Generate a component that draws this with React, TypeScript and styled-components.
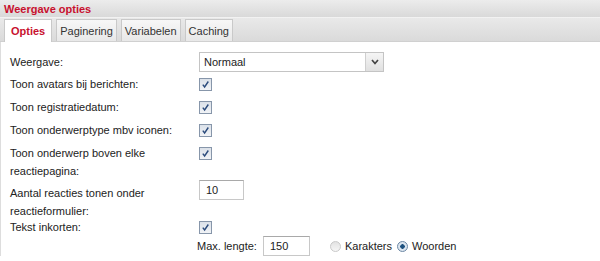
import { Fragment } from "react";
import styled, { createGlobalStyle } from "styled-components";

const Global = createGlobalStyle`
  html, body { margin: 0; padding: 0; background: #fff; }
  body { font-family: "Liberation Sans", Arial, sans-serif; font-size: 11px; color: #222; }
`;

const Panel = styled.div`
  width: 600px;
  height: 261px;
  overflow: hidden;
  background: #fff;
`;

const Header = styled.div`
  height: 17px;
  padding-left: 4px;
  display: flex;
  align-items: center;
  background: linear-gradient(#ececec, #d9d9d9);
  border-bottom: 1px solid #f2f2f2;
  color: #c8102e;
  font-weight: bold;
  font-size: 11px;
`;

const TabBar = styled.div`
  height: 23px;
  padding-left: 4px;
  display: flex;
  align-items: flex-end;
  gap: 4px;
  background: linear-gradient(#e9e9e9, #dadada);
  border-bottom: 1px solid #d0d0d0;
`;

const Tab = styled.div<{ $active?: boolean }>`
  height: ${(p) => (p.$active ? 22 : 21)}px;
  padding: 0 ${(p) => (p.$active ? 6 : 3)}px;
  display: flex;
  align-items: center;
  border: 1px solid #c9c9c9;
  border-bottom: none;
  background: ${(p) => (p.$active ? "#fff" : "linear-gradient(#f7f7f7, #e8e8e8)")};
  color: ${(p) => (p.$active ? "#c8102e" : "#333")};
  font-weight: ${(p) => (p.$active ? "bold" : "normal")};
  margin-bottom: ${(p) => (p.$active ? "-1px" : "0")};
`;

const Body = styled.div`
  border-left: 1px solid #ddd;
  padding: 10px 0 0 9px;
  display: grid;
  grid-template-columns: 189px 1fr;
  row-gap: 5px;
  align-items: start;
`;

const Label = styled.div<{ $pull?: number; $shift?: number }>`
  line-height: 18px;
  padding-top: ${(p) => p.$shift ?? 0}px;
  margin-top: ${(p) => p.$pull ?? 0}px;
  align-self: ${(p) => (p.$shift === undefined ? "center" : "start")};
`;

const Cell = styled.div<{ $pull?: number }>`
  display: flex;
  align-items: center;
  min-height: 18px;
  margin-top: ${(p) => p.$pull ?? 0}px;
`;

const Select = styled.div`
  width: 185px;
  height: 20px;
  border: 1px solid #c4c4c4;
  display: flex;
  align-items: center;
  justify-content: space-between;
  padding-left: 4px;
  box-sizing: border-box;
  background: #fff;
`;

const Arrow = styled.div`
  width: 17px;
  height: 18px;
  display: flex;
  align-items: center;
  justify-content: center;
  background: linear-gradient(#f5f5f5, #e0e0e0);
  border-left: 1px solid #cfcfcf;
`;

const Check = styled.div`
  width: 11px;
  height: 11px;
  border: 1px solid #8796aa;
  background: linear-gradient(#dbe1e9, #f1f3f6);
  display: flex;
  align-items: center;
  justify-content: center;
`;

const TextBox = styled.div<{ $w: number }>`
  width: ${(p) => p.$w}px;
  height: 20px;
  box-sizing: border-box;
  border: 1px solid #c8c8c8;
  border-top-color: #a9a9a9;
  padding-left: 6px;
  display: flex;
  align-items: center;
  background: #fff;
`;

const SubRow = styled.div`
  grid-column: 2;
  display: flex;
  align-items: center;
  margin: -5px 0 0 -2px;
  gap: 6px;
`;

const RadioGroup = styled.div`
  display: flex;
  align-items: center;
  margin-left: 14px;
`;

const Radio = styled.div<{ $on?: boolean }>`
  width: 9px;
  height: 9px;
  border-radius: 50%;
  border: 1px solid ${(p) => (p.$on ? "#6b87a4" : "#c9c9c9")};
  background: ${(p) =>
    p.$on
      ? "radial-gradient(circle, #1f527f 0 2px, #dbe5ef 2.5px)"
      : "linear-gradient(#e2e2e2, #f6f6f6)"};
  margin-right: 4px;
`;

const RadioLabel = styled.span`
  margin-right: 5px;
`;

const Tick = () => (
  <svg width="9" height="9" viewBox="0 0 9 9">
    <path d="M1.8 4.6 L3.6 7 L7.3 1.5" fill="none" stroke="#2b4b7c" strokeWidth="1.4" />
  </svg>
);

const Chevron = () => (
  <svg width="8" height="6" viewBox="0 0 8 6">
    <path d="M1 1 L4 4.5 L7 1" fill="none" stroke="#444" strokeWidth="1.7" />
  </svg>
);

const checks = [
  "Toon avatars bij berichten:",
  "Toon registratiedatum:",
  "Toon onderwerptype mbv iconen:",
];

export default function App() {
  return (
    <Panel>
      <Global />
      <Header>Weergave opties</Header>
      <TabBar>
        <Tab $active>Opties</Tab>
        <Tab>Paginering</Tab>
        <Tab>Variabelen</Tab>
        <Tab>Caching</Tab>
      </TabBar>
      <Body>
        <Label>Weergave:</Label>
        <Cell>
          <Select>
            Normaal
            <Arrow>
              <Chevron />
            </Arrow>
          </Select>
        </Cell>
        {checks.map((c, i) => (
          <Fragment key={c}>
            <Label $pull={i === 0 ? -2 : 0}>{c}</Label>
            <Cell $pull={i === 0 ? -2 : 0}>
              <Check>
                <Tick />
              </Check>
            </Cell>
          </Fragment>
        ))}
        <Label $shift={0}>
          Toon onderwerp boven elke
          <br />
          reactiepagina:
        </Label>
        <Cell>
          <Check>
            <Tick />
          </Check>
        </Cell>
        <Label $shift={4} $pull={-5}>
          Aantal reacties tonen onder
          <br />
          reactieformulier:
        </Label>
        <Cell $pull={-5}>
          <TextBox $w={45}>10</TextBox>
        </Cell>
        <Label $pull={-7}>Tekst inkorten:</Label>
        <Cell $pull={-7}>
          <Check>
            <Tick />
          </Check>
        </Cell>
        <SubRow>
          Max. lengte:
          <TextBox $w={47}>150</TextBox>
          <RadioGroup>
            <Radio />
            <RadioLabel>Karakters</RadioLabel>
            <Radio $on />
            <span>Woorden</span>
          </RadioGroup>
        </SubRow>
      </Body>
    </Panel>
  );
}
